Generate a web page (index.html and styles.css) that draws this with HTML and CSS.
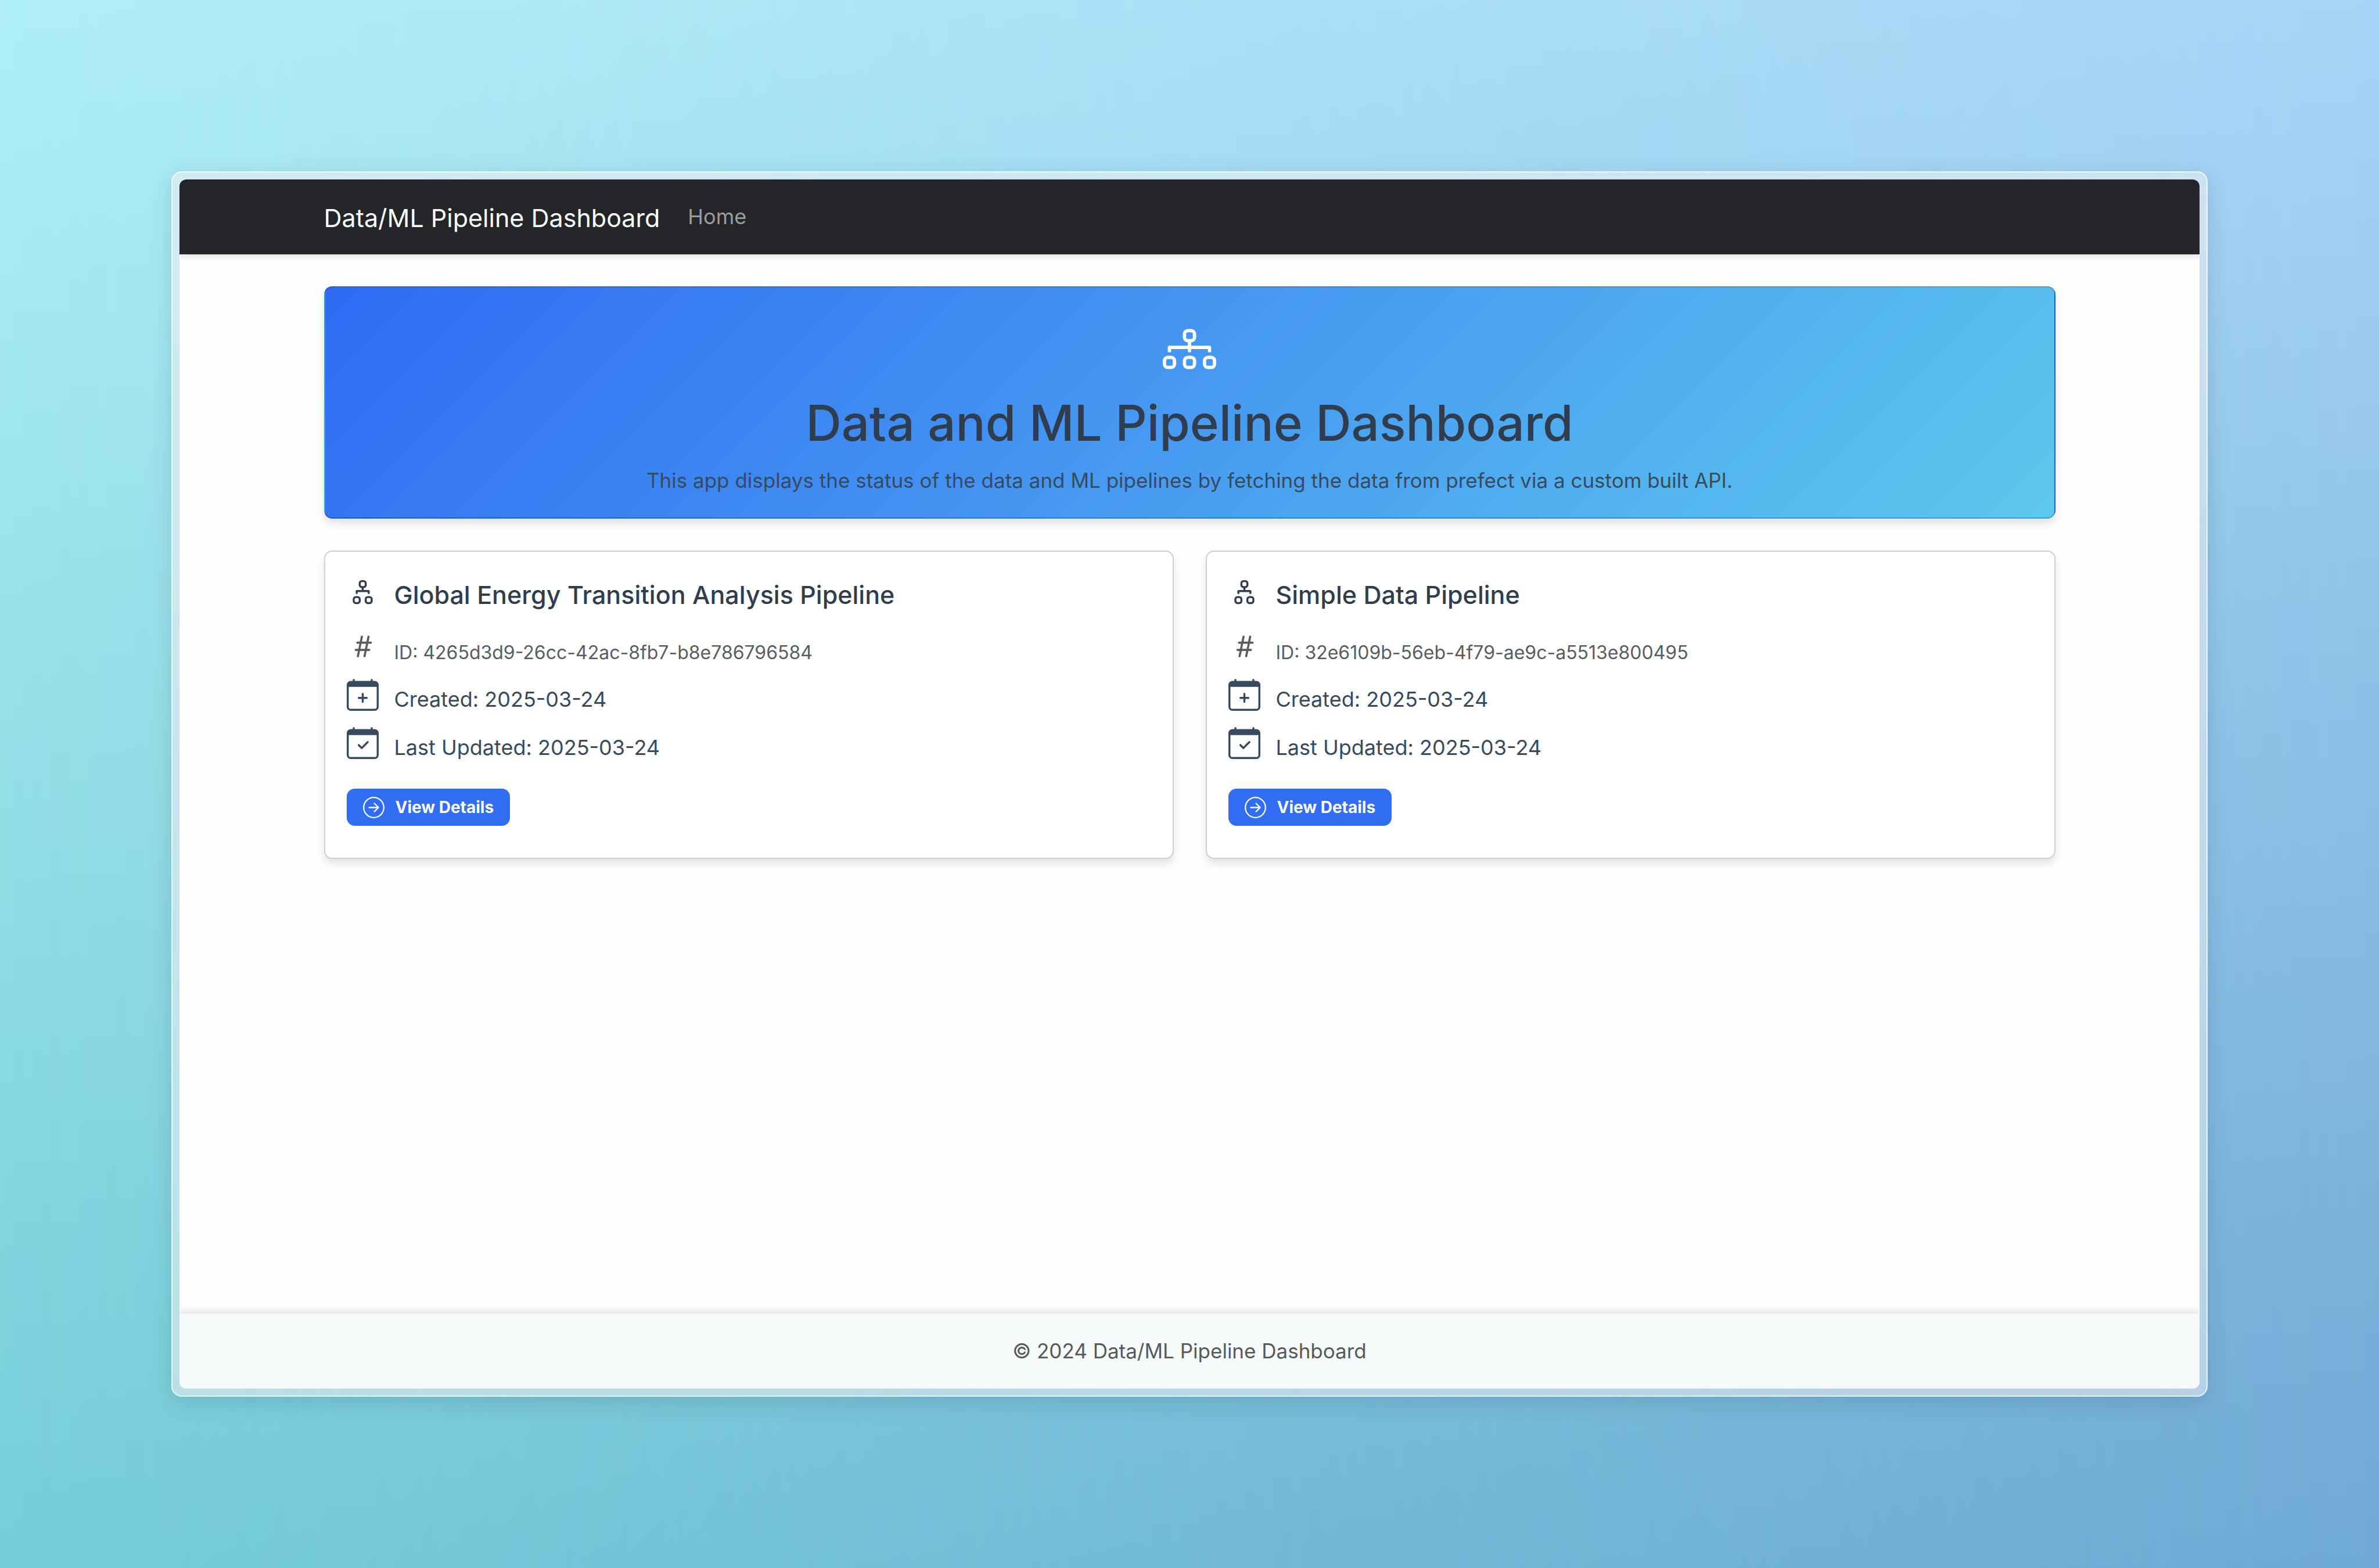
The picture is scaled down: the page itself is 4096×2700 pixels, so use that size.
FILE: index.html
```
<!DOCTYPE html>
<html lang="en">
<head>
<meta charset="utf-8">
<meta name="viewport" content="width=device-width, initial-scale=1">
<title>Data/ML Pipeline Dashboard</title>
<link rel="stylesheet" href="styles.css">
</head>
<body>
<svg class="sprite" aria-hidden="true">
  <symbol id="diagram-3" viewBox="0 0 16 16"><path fill-rule="evenodd" d="M6 3.5A1.5 1.5 0 0 1 7.5 2h1A1.5 1.5 0 0 1 10 3.5v1A1.5 1.5 0 0 1 8.5 6v1H14a.5.5 0 0 1 .5.5v1a.5.5 0 0 1-1 0V8h-5v.5a.5.5 0 0 1-1 0V8h-5v.5a.5.5 0 0 1-1 0v-1A.5.5 0 0 1 2 7h5.5V6A1.5 1.5 0 0 1 6 4.5zM8.5 5a.5.5 0 0 0 .5-.5v-1a.5.5 0 0 0-.5-.5h-1a.5.5 0 0 0-.5.5v1a.5.5 0 0 0 .5.5zM0 11.5A1.5 1.5 0 0 1 1.5 10h1A1.5 1.5 0 0 1 4 11.5v1A1.5 1.5 0 0 1 2.5 14h-1A1.5 1.5 0 0 1 0 12.5zm1.5-.5a.5.5 0 0 0-.5.5v1a.5.5 0 0 0 .5.5h1a.5.5 0 0 0 .5-.5v-1a.5.5 0 0 0-.5-.5zm4.5.5A1.5 1.5 0 0 1 7.5 10h1a1.5 1.5 0 0 1 1.5 1.5v1A1.5 1.5 0 0 1 8.5 14h-1A1.5 1.5 0 0 1 6 12.5zm1.5-.5a.5.5 0 0 0-.5.5v1a.5.5 0 0 0 .5.5h1a.5.5 0 0 0 .5-.5v-1a.5.5 0 0 0-.5-.5zm4.5.5a1.5 1.5 0 0 1 1.5-1.5h1a1.5 1.5 0 0 1 1.5 1.5v1a1.5 1.5 0 0 1-1.5 1.5h-1a1.5 1.5 0 0 1-1.5-1.5zm1.5-.5a.5.5 0 0 0-.5.5v1a.5.5 0 0 0 .5.5h1a.5.5 0 0 0 .5-.5v-1a.5.5 0 0 0-.5-.5z"/></symbol>
  <symbol id="diagram-2" viewBox="0 0 16 16"><path fill-rule="evenodd" d="M6 3.5A1.5 1.5 0 0 1 7.5 2h1A1.5 1.5 0 0 1 10 3.5v1A1.5 1.5 0 0 1 8.5 6v1H11a.5.5 0 0 1 .5.5v1a.5.5 0 0 1-1 0V8h-5v.5a.5.5 0 0 1-1 0v-1A.5.5 0 0 1 5 7h2.5V6A1.5 1.5 0 0 1 6 4.5zM8.5 5a.5.5 0 0 0 .5-.5v-1a.5.5 0 0 0-.5-.5h-1a.5.5 0 0 0-.5.5v1a.5.5 0 0 0 .5.5zM3 11.5A1.5 1.5 0 0 1 4.5 10h1A1.5 1.5 0 0 1 7 11.5v1A1.5 1.5 0 0 1 5.5 14h-1A1.5 1.5 0 0 1 3 12.5zm1.5-.5a.5.5 0 0 0-.5.5v1a.5.5 0 0 0 .5.5h1a.5.5 0 0 0 .5-.5v-1a.5.5 0 0 0-.5-.5zm4.5.5a1.5 1.5 0 0 1 1.5-1.5h1a1.5 1.5 0 0 1 1.5 1.5v1a1.5 1.5 0 0 1-1.5 1.5h-1A1.5 1.5 0 0 1 9 12.5zm1.5-.5a.5.5 0 0 0-.5.5v1a.5.5 0 0 0 .5.5h1a.5.5 0 0 0 .5-.5v-1a.5.5 0 0 0-.5-.5z"/></symbol>
  <symbol id="hash" viewBox="0 0 16 16"><path d="M8.39 12.648a1 1 0 0 0-.015.18c0 .305.21.508.5.508.266 0 .492-.172.555-.477l.554-2.703h1.204c.421 0 .617-.234.617-.547 0-.312-.188-.53-.617-.53h-.985l.516-2.524h1.265c.43 0 .618-.227.618-.547 0-.313-.188-.524-.618-.524h-1.046l.476-2.304a1 1 0 0 0 .016-.164.51.51 0 0 0-.516-.516.54.54 0 0 0-.539.43l-.523 2.554H7.617l.477-2.304c.008-.04.015-.118.015-.164a.51.51 0 0 0-.523-.516.54.54 0 0 0-.531.43L6.53 5.484H5.414c-.43 0-.617.22-.617.532s.187.539.617.539h.906l-.515 2.523H4.609c-.421 0-.609.219-.609.531s.188.547.61.547h.976l-.516 2.492c-.008.04-.015.125-.015.18 0 .305.21.508.5.508.265 0 .492-.172.554-.477l.555-2.703h2.242zm-1-6.109h2.266l-.515 2.563H6.859l.532-2.563z"/></symbol>
  <symbol id="calendar-plus" viewBox="0 0 16 16"><path d="M8 7a.5.5 0 0 1 .5.5V9H10a.5.5 0 0 1 0 1H8.5v1.5a.5.5 0 0 1-1 0V10H6a.5.5 0 0 1 0-1h1.5V7.5A.5.5 0 0 1 8 7"/><path d="M3.5 0a.5.5 0 0 1 .5.5V1h8V.5a.5.5 0 0 1 1 0V1h1a2 2 0 0 1 2 2v11a2 2 0 0 1-2 2H2a2 2 0 0 1-2-2V3a2 2 0 0 1 2-2h1V.5a.5.5 0 0 1 .5-.5M1 4v10a1 1 0 0 0 1 1h12a1 1 0 0 0 1-1V4z"/></symbol>
  <symbol id="calendar-check" viewBox="0 0 16 16"><path d="M10.854 7.146a.5.5 0 0 1 0 .708l-3 3a.5.5 0 0 1-.708 0l-1.5-1.5a.5.5 0 1 1 .708-.708L7.5 9.793l2.646-2.647a.5.5 0 0 1 .708 0"/><path d="M3.5 0a.5.5 0 0 1 .5.5V1h8V.5a.5.5 0 0 1 1 0V1h1a2 2 0 0 1 2 2v11a2 2 0 0 1-2 2H2a2 2 0 0 1-2-2V3a2 2 0 0 1 2-2h1V.5a.5.5 0 0 1 .5-.5M1 4v10a1 1 0 0 0 1 1h12a1 1 0 0 0 1-1V4z"/></symbol>
  <symbol id="arrow-circle" viewBox="0 0 16 16"><path fill-rule="evenodd" d="M1 8a7 7 0 1 0 14 0A7 7 0 0 0 1 8m15 0A8 8 0 1 1 0 8a8 8 0 0 1 16 0M4.500 7.500a.5.5 0 0 0 0 1h5.793l-2.147 2.146a.5.5 0 0 0 .708.708l3-3a.5.5 0 0 0 0-.708l-3-3a.5.5 0 1 0-.708.708L10.293 7.500z"/></symbol>
</svg>
<div class="frame">
  <div class="app">
    <header class="navbar">
      <nav class="container navbar-inner">
        <a class="brand" href="#">Data/ML Pipeline Dashboard</a>
        <a class="nav-link" href="#">Home</a>
      </nav>
    </header>
    <main class="container content">
      <section class="hero">
        <svg class="hero-icon" aria-hidden="true"><use href="#diagram-3"/></svg>
        <h1 class="hero-title">Data and ML Pipeline Dashboard</h1>
        <p class="hero-lead">This app displays the status of the data and ML pipelines by fetching the data from prefect via a custom built API.</p>
      </section>
      <div class="cards">
        <article class="card">
          <h2 class="card-title"><svg class="icon" aria-hidden="true"><use href="#diagram-2"/></svg><span>Global Energy Transition Analysis Pipeline</span></h2>
          <div class="details">
            <p class="row row-id"><svg class="icon" aria-hidden="true"><use href="#hash"/></svg><span class="row-text">ID: 4265d3d9-26cc-42ac-8fb7-b8e786796584</span></p>
            <p class="row"><svg class="icon" aria-hidden="true"><use href="#calendar-plus"/></svg><span class="row-text">Created: 2025-03-24</span></p>
            <p class="row"><svg class="icon" aria-hidden="true"><use href="#calendar-check"/></svg><span class="row-text">Last Updated: 2025-03-24</span></p>
          </div>
          <a class="btn" href="#"><svg class="btn-icon" aria-hidden="true"><use href="#arrow-circle"/></svg>View Details</a>
        </article>
        <article class="card">
          <h2 class="card-title"><svg class="icon" aria-hidden="true"><use href="#diagram-2"/></svg><span>Simple Data Pipeline</span></h2>
          <div class="details">
            <p class="row row-id"><svg class="icon" aria-hidden="true"><use href="#hash"/></svg><span class="row-text">ID: 32e6109b-56eb-4f79-ae9c-a5513e800495</span></p>
            <p class="row"><svg class="icon" aria-hidden="true"><use href="#calendar-plus"/></svg><span class="row-text">Created: 2025-03-24</span></p>
            <p class="row"><svg class="icon" aria-hidden="true"><use href="#calendar-check"/></svg><span class="row-text">Last Updated: 2025-03-24</span></p>
          </div>
          <a class="btn" href="#"><svg class="btn-icon" aria-hidden="true"><use href="#arrow-circle"/></svg>View Details</a>
        </article>
      </div>
    </main>
    <footer class="footer">© 2024 Data/ML Pipeline Dashboard</footer>
  </div>
</div>
</body>
</html>
```
FILE: styles.css
```
*,
*::before,
*::after {
  box-sizing: border-box;
}

body {
  position: relative;
  display: flex;
  min-height: 100vh;
  margin: 0;
  padding: 295px;
  font: 400 36px/55px Inter, "Liberation Sans", sans-serif;
  color: #384a5e;
  background: linear-gradient(to bottom, #b0eff7, #76ced8);
}

/* Blue half of the backdrop, fading in from the left */
body::before {
  content: "";
  position: absolute;
  inset: 0;
  z-index: -1;
  background: linear-gradient(to bottom, #a7d4f6, #6fa8d4);
  -webkit-mask-image: linear-gradient(to right, transparent, #000);
  mask-image: linear-gradient(to right, transparent, #000);
}

h1,
h2,
p {
  margin: 0;
}

.sprite {
  position: absolute;
  width: 0;
  height: 0;
}

.frame {
  display: flex;
  flex: 1;
  min-width: 0;
  padding: 12px;
  border: 2px solid rgba(240, 255, 255, 0.8);
  border-radius: 18px;
  background: rgba(248, 242, 242, 0.5);
  box-shadow: 0 9px 40px rgba(0, 0, 0, 0.12);
}

.app {
  display: flex;
  flex: 1;
  flex-direction: column;
  min-width: 0;
  overflow: hidden;
  border-radius: 12px;
  background: #fefefe;
}

.container {
  width: 100%;
  max-width: 2981px;
  margin: 0 auto;
}

.navbar {
  background: #232529;
  box-shadow: 0 5px 9px rgba(0, 0, 0, 0.1);
}

.navbar-inner {
  display: flex;
  align-items: center;
  gap: 48px;
  min-height: 129px;
}

.brand {
  padding-top: 4px;
  font-size: 43px;
  color: #fff;
  text-decoration: none;
}

.nav-link {
  color: #9b9c9e;
  text-decoration: none;
}

.content {
  flex: 1;
  padding: 55px 0;
}

.hero {
  display: flex;
  flex-direction: column;
  align-items: center;
  padding: 60px 37px 36px;
  border: 2px solid rgba(0, 0, 0, 0.175);
  border-radius: 14px;
  background: linear-gradient(135deg, #306af4, #5dc8ed);
  box-shadow: 0 9px 14px rgba(0, 0, 0, 0.1);
  text-align: center;
}

.hero-icon {
  width: 92px;
  height: 92px;
  margin-bottom: 31px;
  fill: #fff;
}

.hero-title {
  margin-bottom: 20px;
  font-size: 85px;
  font-weight: 500;
  line-height: 102px;
  color: #2f3d4f;
}

.hero-lead {
  font-size: 35px;
}

.cards {
  display: grid;
  grid-template-columns: 1fr 1fr;
  gap: 55px;
  margin-top: 55px;
}

.card {
  padding: 42px 37px 55px;
  border: 2px solid #d0d0d0;
  border-radius: 14px;
  background: #fff;
  box-shadow: 0 9px 14px rgba(0, 0, 0, 0.1);
}

.icon {
  flex: none;
  width: 55px;
  height: 55px;
  fill: currentColor;
}

.card-title {
  display: flex;
  gap: 27px;
  margin-bottom: 34px;
  font-size: 43px;
  font-weight: 500;
  color: #2f3d4f;
}

.card-title span {
  padding-top: 5px;
}

.details {
  display: flex;
  flex-direction: column;
  gap: 20px;
  margin-bottom: 43px;
}

.row {
  display: flex;
  gap: 27px;
}

.row-text {
  padding-top: 8px;
}

.row-id {
  align-items: center;
  height: 63px;
  font-size: 32px;
  color: #595d5f;
}

.row-id .icon {
  align-self: flex-start;
}

.row-id .row-text {
  padding-top: 12px;
}

.btn {
  display: inline-flex;
  align-items: center;
  gap: 19px;
  height: 64px;
  padding: 0 28px;
  border-radius: 14px;
  background: #306df3;
  font-size: 28px;
  font-weight: 700;
  line-height: 40px;
  color: #fff;
  text-decoration: none;
  vertical-align: top;
}

.btn-icon {
  width: 37px;
  height: 37px;
  fill: currentColor;
}

.footer {
  padding: 37px;
  background: #f6fafb;
  box-shadow: 0 -5px 9px rgba(0, 0, 0, 0.1);
  font-size: 35px;
  text-align: center;
  color: #58595b;
}
```
